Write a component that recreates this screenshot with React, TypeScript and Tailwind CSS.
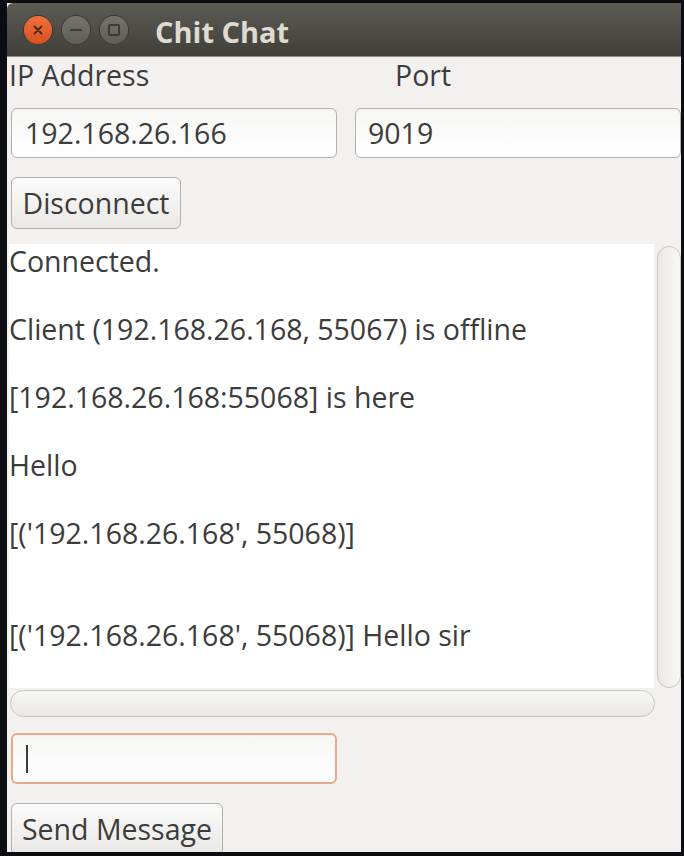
import React from "react";

const font = { fontFamily: '"Open Sans", "Noto Sans", sans-serif' };

export default function App() {
  const lines = [
    "Connected.",
    "",
    "Client (192.168.26.168, 55067) is offline",
    "",
    "[192.168.26.168:55068] is here",
    "",
    "Hello",
    "",
    "[('192.168.26.168', 55068)]",
    "",
    "",
    "[('192.168.26.168', 55068)] Hello sir",
  ];
  return (
    <div className="w-[684px] h-[856px] bg-[#0c0d12] overflow-hidden pt-[3px] pl-[7px] pr-[3px] pb-[4px]">
      <div className="flex flex-col h-full overflow-hidden bg-[#f2f1f0] text-[#3c3c3c]">
        {/* title bar */}
        <div className="h-[54px] shrink-0 flex items-center bg-gradient-to-b from-[#5c5b54] to-[#403f3a] border-b border-[#8e8b84] rounded-tl-[6px]">
          <div className="ml-[17px] w-[28px] h-[28px] rounded-full bg-gradient-to-b from-[#f0703c] to-[#d9511f] flex items-center justify-center shadow-[0_0_0_1px_#3a3934]">
            <svg width="12" height="12" viewBox="0 0 12 12">
              <path d="M2.5 2.5 L9.5 9.5 M9.5 2.5 L2.5 9.5" stroke="#4a2a1c" strokeWidth="1.8" strokeLinecap="round" />
            </svg>
          </div>
          <div className="ml-[10px] w-[28px] h-[28px] rounded-full bg-gradient-to-b from-[#74736d] to-[#5f5e58] flex items-center justify-center shadow-[0_0_0_1px_#3a3934]">
            <div className="w-[12px] h-[2px] bg-[#3b3a36] rounded" />
          </div>
          <div className="ml-[10px] w-[28px] h-[28px] rounded-full bg-gradient-to-b from-[#74736d] to-[#5f5e58] flex items-center justify-center shadow-[0_0_0_1px_#3a3934]">
            <div className="w-[12px] h-[12px] border-2 border-[#3b3a36] rounded-[2px]" />
          </div>
          <div className="ml-[27px] mt-[3px] text-[29px] font-bold text-[#dfdbd2] leading-none" style={font}>
            Chit Chat
          </div>
        </div>
        {/* labels */}
        <div className="flex shrink-0 h-[51px] items-start pt-[3px] text-[28.5px] leading-[30px]" style={font}>
          <div className="ml-[2px] w-[386px]">IP Address</div>
          <div>Port</div>
        </div>
        {/* inputs */}
        <div className="flex shrink-0 gap-[18px] pl-[4px]">
          <div className="w-[326px] h-[50px] rounded-[6px] border border-[#b3aea8] bg-gradient-to-b from-[#f6f6f5] to-[#ffffff] flex items-center pl-[13px] text-[28.5px]" style={font}>
            192.168.26.166
          </div>
          <div className="w-[326px] h-[50px] rounded-[6px] border border-[#b3aea8] bg-gradient-to-b from-[#f6f6f5] to-[#ffffff] flex items-center pl-[12px] text-[28.5px]" style={font}>
            9019
          </div>
        </div>
        {/* disconnect */}
        <div className="shrink-0 pl-[4px] mt-[19px]">
          <div className="w-[170px] h-[52px] rounded-[6px] border border-[#b3aea8] bg-gradient-to-b from-[#fbfbfb] to-[#e9e8e6] flex items-center justify-center text-[28.5px]" style={font}>
            Disconnect
          </div>
        </div>
        {/* text area */}
        <div className="flex shrink-0 mt-[15px] h-[444px]">
          <div className="ml-[2px] w-[645px] bg-white text-[28.5px] leading-[34px]" style={font}>
            {lines.map((l, i) => (
              <div key={i} className="h-[34px] whitespace-pre">{l || " "}</div>
            ))}
          </div>
          <div className="ml-[3px] w-[24px] pt-[2px]">
            <div className="w-[24px] h-[442px] rounded-full border border-[#c9c5c0] bg-gradient-to-r from-[#e9e8e6] to-[#f7f7f6]" />
          </div>
        </div>
        {/* horizontal scrollbar */}
        <div className="shrink-0 ml-[3px] mt-[2px] w-[645px] h-[27px] rounded-full border border-[#c9c5c0] bg-gradient-to-b from-[#f7f7f6] to-[#e9e8e6]" />
        {/* entry */}
        <div className="shrink-0 pl-[4px] mt-[16px]">
          <div className="w-[326px] h-[51px] rounded-[6px] border-2 border-[#e9a889] bg-gradient-to-b from-[#f6f6f5] to-[#ffffff] flex items-center pl-[13px]">
            <div className="w-[2px] h-[28px] bg-[#3c3c3c]" />
          </div>
        </div>
        {/* send */}
        <div className="shrink-0 pl-[4px] mt-[19px]">
          <div className="w-[212px] h-[52px] rounded-[6px] border border-[#b3aea8] bg-gradient-to-b from-[#fbfbfb] to-[#e9e8e6] flex items-center justify-center text-[28.5px]" style={font}>
            Send Message
          </div>
        </div>
      </div>
    </div>
  );
}
